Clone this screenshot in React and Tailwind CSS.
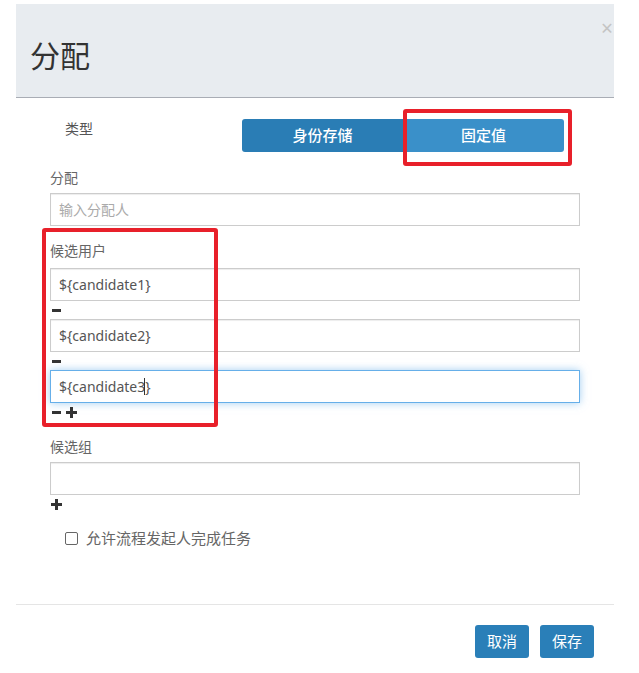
import React from "react";

const font = { fontFamily: '"Noto Sans", "Noto Sans CJK SC", sans-serif' };

function Minus() {
  return <span className="block w-[9px] h-[3px] bg-[#333]" />;
}

function Plus() {
  return (
    <span className="relative block w-[11px] h-[11px]">
      <span className="absolute left-0 top-[4px] w-[11px] h-[3px] bg-[#333]" />
      <span className="absolute top-0 left-[4px] w-[3px] h-[11px] bg-[#333]" />
    </span>
  );
}

function TextInput({ value, placeholder, focused, caret }) {
  return (
    <div
      className={`w-[530px] h-[33px] flex items-center px-[8px] text-[14px] text-[#555] bg-white border ${
        focused
          ? "border-[#66afe9] shadow-[0_0_8px_rgba(102,175,233,0.6)]"
          : "border-[#ccc] shadow-[inset_0_1px_1px_rgba(0,0,0,0.075)]"
      }`}
    >
      {value ? (
        <span className="flex items-center">
          {value}
          {caret && <span className="inline-block w-px h-[17px] bg-[#333] -ml-[7px] mr-[6px]" />}
        </span>
      ) : (
        <span className="text-[#aaa]">{placeholder}</span>
      )}
    </div>
  );
}

function Label({ children, className = "" }) {
  return <div className={`text-[14px] leading-[18px] text-[#666] ${className}`}>{children}</div>;
}

export default function App() {
  return (
    <div className="relative w-[639px] h-[673px] bg-white pt-[4px] pl-[16px] overflow-hidden" style={font}>
      <div className="w-[598px]">
        {/* header */}
        <div className="relative h-[94px] bg-[#e8ecf0] border-b border-[#a9adb5] flex items-center pl-[14px] pt-[11px]">
          <h1 className="text-[30px] leading-none text-[#333]">分配</h1>
          <span className="absolute top-[14px] right-[1px] text-[21px] leading-none text-[#c4c4c4]">×</span>
        </div>

        {/* body */}
        <div className="px-[34px] pt-[21px]">
          <div className="flex items-start">
            <div className="w-[192px] pl-[15px] text-[14px] leading-[20px] text-[#555]">类型</div>
            <div className="flex w-[322px] h-[33px] text-white text-[15px] font-medium">
              <div className="flex-1 flex items-center justify-center bg-[#2a7db5] rounded-l-[3px]">身份存储</div>
              <div className="flex-1 flex items-center justify-center bg-[#3a90c9] rounded-r-[3px]">固定值</div>
            </div>
          </div>

          <Label className="mt-[17px]">分配</Label>
          <div className="mt-[6px]">
            <TextInput placeholder="输入分配人" />
          </div>

          <Label className="mt-[16px]">候选用户</Label>
          <div className="mt-[8px]">
            <TextInput value="${candidate1}" />
            <div className="h-[18px] flex items-center pl-[2px]">
              <Minus />
            </div>
            <TextInput value="${candidate2}" />
            <div className="h-[18px] flex items-center pl-[2px]">
              <Minus />
            </div>
            <TextInput value="${candidate3}" focused caret />
            <div className="h-[18px] flex items-center gap-[5px] pl-[2px]">
              <Minus />
              <Plus />
            </div>
          </div>

          <Label className="mt-[17px]">候选组</Label>
          <div className="mt-[6px]">
            <TextInput />
            <div className="h-[18px] flex items-center pl-[1px]">
              <Plus />
            </div>
          </div>

          <div className="mt-[15px] h-[20px] flex items-center pl-[15px]">
            <span className="block w-[13px] h-[13px] border border-[#666] rounded-[2px] bg-white" />
            <span className="ml-[8px] text-[15px] text-[#666]">允许流程发起人完成任务</span>
          </div>
        </div>

        {/* footer */}
        <div className="mt-[56px] border-t border-[#e5e5e5] flex justify-end gap-[11px] pt-[20px] pr-[20px]">
          <button className="w-[54px] h-[33px] rounded-[3px] bg-[#2a7fb8] text-white text-[15px]">取消</button>
          <button className="w-[54px] h-[33px] rounded-[3px] bg-[#2a7fb8] text-white text-[15px]">保存</button>
        </div>
      </div>

      {/* red annotation boxes */}
      <div className="absolute left-[403px] top-[109px] w-[169px] h-[57px] border-4 border-[#e8202a] rounded-[3px]" />
      <div className="absolute left-[42px] top-[228px] w-[176px] h-[199px] border-4 border-[#e8202a] rounded-[3px]" />
    </div>
  );
}
